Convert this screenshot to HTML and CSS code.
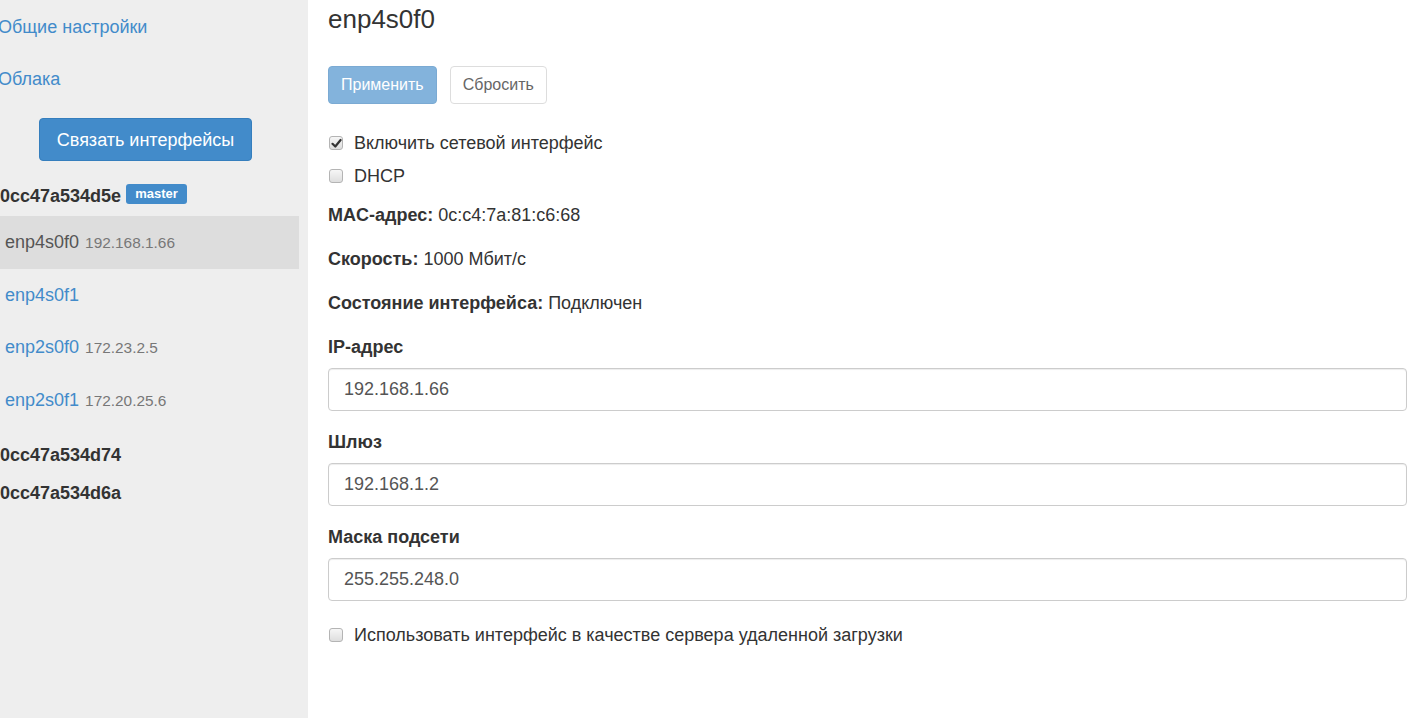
FILE: index.html
```html
<!DOCTYPE html>
<html lang="ru">
<head>
    <meta charset="UTF-8">
    <meta name="viewport" content="width=device-width, initial-scale=1.0">
    <title>Сетевые интерфейсы</title>
    <link rel="stylesheet" href="styles.css">
</head>
<body>
    <div class="layout">
        <div class="sidebar">
            <a href="#" class="top-link">Общие настройки</a>
            <a href="#" class="top-link">Облака</a>

            <button class="btn btn-primary bond-btn">Связать интерфейсы</button>

            <div class="host-group">
                <div class="host">0cc47a534d5e <span class="badge">master</span></div>
                <ul class="iface-list">
                    <li class="active"><a href="#">enp4s0f0</a> <span class="ip">192.168.1.66</span></li>
                    <li><a href="#">enp4s0f1</a></li>
                    <li><a href="#">enp2s0f0</a> <span class="ip">172.23.2.5</span></li>
                    <li><a href="#">enp2s0f1</a> <span class="ip">172.20.25.6</span></li>
                </ul>
            </div>

            <div class="host-group">
                <div class="host">0cc47a534d74</div>
            </div>

            <div class="host-group">
                <div class="host">0cc47a534d6a</div>
            </div>
        </div>

        <div class="main">
            <h3 class="title">enp4s0f0</h3>

            <div class="actions">
                <button class="btn btn-primary" disabled>Применить</button>
                <button class="btn btn-default">Сбросить</button>
            </div>

            <label class="check first">
                <span class="box checked">
                    <svg width="11" height="11" viewBox="0 0 11 11"><path d="M1.5 5.8 L4.3 8.5 L9.6 2" fill="none" stroke="#333" stroke-width="2.2" stroke-linecap="round" stroke-linejoin="round"/></svg>
                </span>
                Включить сетевой интерфейс
            </label>
            <label class="check">
                <span class="box"></span>
                DHCP
            </label>

            <div class="info first-info"><b>MAC-адрес:</b> 0c:c4:7a:81:c6:68</div>
            <div class="info"><b>Скорость:</b> 1000 Мбит/с</div>
            <div class="info"><b>Состояние интерфейса:</b> Подключен</div>

            <div class="form-group">
                <label class="field-label">IP-адрес</label>
                <input class="form-control" type="text" value="192.168.1.66">
            </div>
            <div class="form-group">
                <label class="field-label">Шлюз</label>
                <input class="form-control" type="text" value="192.168.1.2">
            </div>
            <div class="form-group">
                <label class="field-label">Маска подсети</label>
                <input class="form-control" type="text" value="255.255.248.0">
            </div>

            <label class="check last">
                <span class="box"></span>
                Использовать интерфейс в качестве сервера удаленной загрузки
            </label>
        </div>
    </div>
</body>
</html>
```

FILE: styles.css
```css
body {
    font-family: 'Liberation Sans', Arial, sans-serif;
    font-size: 18px;
    line-height: 26px;
    color: #333;
    margin: 0;
    padding: 0;
    background-color: #fff;
}

a {
    color: #428bca;
    text-decoration: none;
}

.layout {
    display: flex;
    min-height: 718px;
}

.sidebar {
    width: 308px;
    flex-shrink: 0;
    background-color: #eee;
    padding-top: 1px;
    box-sizing: border-box;
}

.top-link {
    display: block;
    padding: 13px 0;
    margin-left: -2px;
}

.btn {
    font-family: inherit;
    font-size: 16px;
    line-height: 20px;
    height: 38px;
    padding: 8px 12px;
    border-radius: 4px;
    border: 1px solid transparent;
    cursor: pointer;
    box-sizing: border-box;
}

.btn-primary {
    background-color: #428bca;
    border-color: #357ebd;
    color: #fff;
}

.btn-primary[disabled] {
    opacity: 0.65;
    cursor: default;
}

.btn-default {
    background-color: #fff;
    border-color: #ddd;
    color: #666;
}

.bond-btn {
    display: block;
    margin: 13px 0 22px 39px;
    height: 43px;
    width: 213px;
    font-size: 18px;
    padding: 0;
}

.host-group {
    margin-top: 12px;
}

.host {
    font-weight: bold;
    display: flex;
    align-items: center;
    gap: 5px;
}

.badge {
    display: inline-block;
    background-color: #428bca;
    color: #fff;
    font-size: 13px;
    line-height: 20px;
    padding: 0 9px;
    border-radius: 3px;
    margin-top: -4px;
}

.iface-list {
    list-style: none;
    margin: 7px 0 15px 0;
    padding: 0;
    width: 299px;
}

.iface-list li {
    padding: 13px 5px;
}

.iface-list li.active {
    background-color: #ddd;
}

.iface-list li.active a {
    color: #555;
}

.iface-list .ip {
    font-size: 15.4px;
    color: #777;
    margin-left: 1px;
}

.main {
    flex: 1;
    padding: 0 12px 0 20px;
}

.title {
    font-size: 26px;
    font-weight: normal;
    line-height: 28px;
    margin: 5px 0 0 0;
}

.actions {
    display: flex;
    gap: 13px;
    margin-top: 33px;
}

.check {
    display: flex;
    align-items: center;
    margin-top: 7px;
}

.check.first {
    margin-top: 26px;
}

.check.last {
    margin-top: 21px;
}

.box {
    width: 12px;
    height: 12px;
    border: 1px solid #b4b4b4;
    border-radius: 3px;
    background: linear-gradient(#f6f6f6, #dedede);
    margin: 0 11px 0 1px;
    display: flex;
    align-items: center;
    justify-content: center;
}

.info {
    margin-top: 18px;
}

.info.first-info {
    margin-top: 13px;
}

.form-group {
    margin-top: 18px;
}

.field-label {
    display: block;
    font-weight: bold;
    margin-bottom: 8px;
}

.form-control {
    display: block;
    width: 100%;
    height: 43px;
    box-sizing: border-box;
    padding: 0 15px;
    font-family: inherit;
    font-size: 18px;
    color: #555;
    border: 1px solid #ccc;
    border-radius: 4px;
    box-shadow: inset 0 1px 1px rgba(0, 0, 0, 0.075);
}
```
